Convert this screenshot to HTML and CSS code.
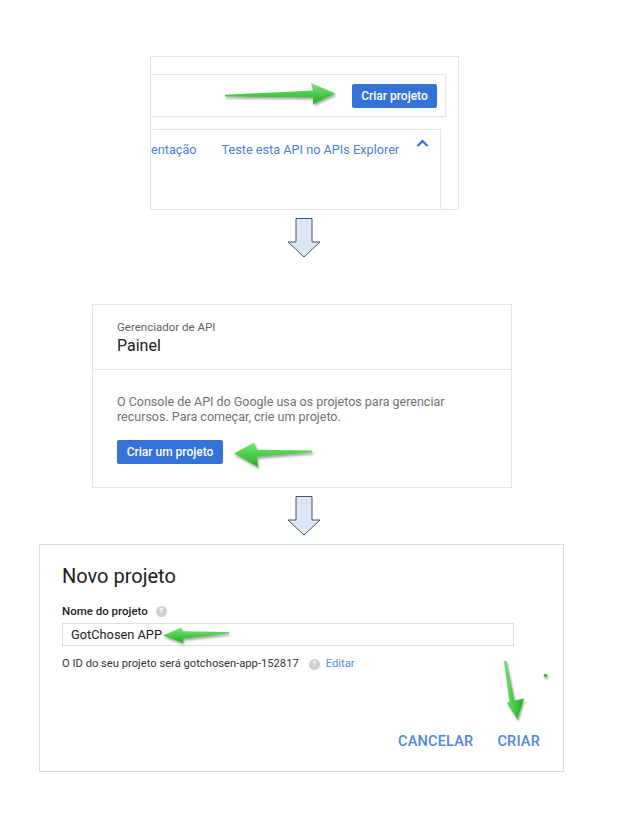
FILE: index.html
```html
<!DOCTYPE html>
<html lang="pt">
<head>
<meta charset="utf-8">
<title>Criar projeto</title>
<link rel="stylesheet" href="styles.css">
</head>
<body>
<div class="page">
  <section class="shot shot1">
    <div class="bar">
      <span class="btn btn-small">Criar projeto</span>
    </div>
    <div class="card-row">
      <span class="link">entação</span>
      <span class="link link-api">Teste esta API no APIs Explorer</span>
      <svg class="caret" width="13" height="8" viewBox="0 0 13 8"><path d="M1.5 7 L6.5 2 L11.5 7" fill="none" stroke="#3b6fd4" stroke-width="2.2"/></svg>
    </div>
  </section>

  <svg class="down" width="34" height="40" viewBox="0 0 34 40"><polygon points="9,0.5 25,0.5 25,24 33,24 17,39 1,24 9,24" fill="#dbe7f5" stroke="#555" stroke-width="1"/></svg>

  <section class="shot shot2">
    <header class="s2-head">
      <div class="kicker">Gerenciador de API</div>
      <h1 class="title">Painel</h1>
    </header>
    <div class="s2-body">
      <p class="intro">O Console de API do Google usa os projetos para gerenciar<br>recursos. Para começar, crie um projeto.</p>
      <span class="btn btn-med">Criar um projeto</span>
    </div>
  </section>

  <svg class="down down2" width="34" height="40" viewBox="0 0 34 40"><polygon points="9,0.5 25,0.5 25,24 33,24 17,39 1,24 9,24" fill="#dbe7f5" stroke="#555" stroke-width="1"/></svg>

  <section class="shot shot3">
    <h2 class="dlg-title">Novo projeto</h2>
    <div class="label">Nome do projeto <span class="help">?</span></div>
    <div class="input">GotChosen APP</div>
    <div class="idline">O ID do seu projeto será gotchosen-app-152817 <span class="help help-id">?</span> <span class="edit">Editar</span></div>
    <div class="actions"><span>CANCELAR</span><span>CRIAR</span></div>
  </section>

  <svg class="annot" width="621" height="827" viewBox="0 0 621 827">
    <defs>
      <linearGradient id="gh" x1="0" y1="0" x2="0" y2="1">
        <stop offset="0" stop-color="#7ae77a"/>
        <stop offset="1" stop-color="#21b021"/>
      </linearGradient>
      <linearGradient id="gv" x1="0" y1="0" x2="1" y2="0">
        <stop offset="0" stop-color="#6fe06f"/>
        <stop offset="1" stop-color="#22b022"/>
      </linearGradient>
      <filter id="sh" x="-20%" y="-50%" width="140%" height="200%">
        <feDropShadow dx="1" dy="2" stdDeviation="1.3" flood-color="#333" flood-opacity="0.45"/>
      </filter>
    </defs>
    <g filter="url(#sh)">
      <path d="M225,94.8 L313,90.4 L311,83 L335.5,93.4 L313,104 L313,97.6 L225,96.6 Z" fill="url(#gh)"/>
      <path d="M312,450.6 L257,449.8 L254,442.5 L234,453.5 L258,467 L257,456.8 L312,452.6 Z" fill="url(#gh)"/>
      <path d="M229,632 L183,631.3 L181,627.5 L163,635.5 L183,643 L183,638.8 L229,633.6 Z" fill="url(#gh)"/>
      <path d="M504,661 L506.5,661 L514.5,700.5 L524,698.5 L517.5,719.5 L507,703 L509.5,701.5 Z" fill="url(#gv)"/>
      <circle cx="545.5" cy="675.5" r="1.8" fill="#2fc02f"/>
    </g>
  </svg>
</div>
</body>
</html>
```
FILE: styles.css
```css
* {
  box-sizing: border-box;
  margin: 0;
  padding: 0;
}

body {
  margin: 0;
  background: #fff;
  font-family: Roboto, "Liberation Sans", Arial, sans-serif;
}

.page {
  position: relative;
  width: 621px;
  height: 827px;
  padding-top: 56px;
  display: flex;
  flex-direction: column;
  align-items: flex-start;
  overflow: hidden;
}

.shot {
  background: #fff;
}

/* ---------- panel 1 ---------- */
.shot1 {
  margin-left: 150px;
  width: 309px;
  height: 154px;
  border: 1px solid #e2e2e2;
  overflow: hidden;
  padding-top: 17px;
  display: flex;
  flex-direction: column;
}

.bar {
  width: 295px;
  height: 43px;
  flex: none;
  display: flex;
  justify-content: flex-end;
  align-items: center;
  padding-right: 8px;
  border: 1px solid #e6e6e6;
  border-left: 0;
  box-shadow: 0 1px 2px rgba(0, 0, 0, 0.05);
}

.btn {
  display: flex;
  align-items: center;
  justify-content: center;
  height: 24px;
  background: #3572d8;
  color: #fff;
  border-radius: 2px;
  font-size: 12px;
  font-weight: 500;
}

.btn-small {
  width: 85px;
}

.btn-med {
  width: 106px;
  margin-top: 16px;
}

.card-row {
  margin-top: 12px;
  width: 290px;
  flex: 1;
  border: 1px solid #e6e6e6;
  border-left: 0;
  border-bottom: 0;
  display: flex;
  align-items: flex-start;
  padding-top: 12px;
  box-shadow: 0 0 2px rgba(0, 0, 0, 0.05);
}

.link {
  font-size: 12.7px;
  line-height: 16px;
  color: #4b7fd4;
  white-space: nowrap;
}

.link-api {
  margin-left: 25px;
}

.caret {
  margin-left: 17px;
  margin-top: -3px;
  flex: none;
}

/* ---------- down arrows ---------- */
.down {
  display: block;
  margin-left: 287px;
  margin-top: 8px;
}

/* ---------- panel 2 ---------- */
.shot2 {
  margin-left: 92px;
  margin-top: 46px;
  width: 420px;
  border: 1px solid #e5e5e5;
}

.s2-head {
  padding: 15px 24px 13px;
  border-bottom: 1px solid #e6e6e6;
}

.kicker {
  font-size: 11.5px;
  line-height: 14px;
  color: #616161;
}

.title {
  margin-top: 2px;
  font-size: 16px;
  line-height: 20px;
  font-weight: 400;
  color: #212121;
}

.s2-body {
  padding: 24px 24px 23px;
}

.intro {
  font-size: 12.5px;
  line-height: 15px;
  color: #707070;
}

/* ---------- panel 3 ---------- */
.down2 {
  margin-top: 8px;
}

.shot3 {
  margin-left: 39px;
  margin-top: 8px;
  width: 525px;
  height: 228px;
  border: 1px solid #dcdcdc;
  padding: 19px 23px 0 22px;
}

.dlg-title {
  font-size: 20px;
  line-height: 24px;
  font-weight: 400;
  color: #212121;
}

.label {
  margin-top: 16px;
  font-size: 11.5px;
  line-height: 14px;
  font-weight: 500;
  color: #222;
  display: flex;
  align-items: center;
  gap: 8px;
}

.help {
  display: inline-flex;
  align-items: center;
  justify-content: center;
  width: 11px;
  height: 11px;
  border-radius: 50%;
  background: #cfcfcf;
  color: #fff;
  font-size: 8px;
  font-weight: 700;
  line-height: 1;
}

.input {
  margin-top: 5px;
  width: 452px;
  height: 23px;
  border: 1px solid #dedede;
  padding-left: 8px;
  font-size: 12.8px;
  line-height: 21px;
  color: #222;
}

.idline {
  margin-top: 11px;
  font-size: 11.2px;
  line-height: 14px;
  color: #333;
  display: flex;
  align-items: center;
}

.help-id {
  margin-left: 10px;
}

.edit {
  margin-left: 6px;
  color: #5a8ad8;
}

.actions {
  margin-top: 63px;
  display: flex;
  justify-content: flex-end;
  gap: 24px;
  font-size: 14.5px;
  line-height: 16px;
  font-weight: 500;
  letter-spacing: 0.2px;
  color: #4f86d9;
}

/* ---------- annotation overlay ---------- */
.annot {
  position: absolute;
  left: 0;
  top: 0;
  pointer-events: none;
}
```
